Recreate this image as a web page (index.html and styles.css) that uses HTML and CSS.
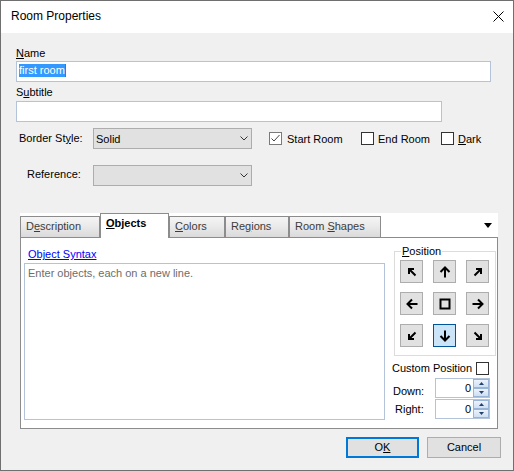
FILE: index.html
```html
<!DOCTYPE html>
<html>
<head>
<meta charset="utf-8">
<link rel="stylesheet" href="styles.css">
</head>
<body>
<div class="window">
  <div class="titlebar">
    <span class="title">Room Properties</span>
    <svg class="close" viewBox="0 0 11 11"><path d="M0.5 0.5 L10.5 10.5 M10.5 0.5 L0.5 10.5" stroke="#000" stroke-width="1" fill="none"/></svg>
  </div>
  <div class="content">
    <div class="lbl"><u>N</u>ame</div>
    <div class="field field-name"><span class="sel">first room</span></div>
    <div class="lbl lbl-sub">S<u>u</u>btitle</div>
    <div class="field field-sub"></div>

    <div class="row row-border">
      <div class="rowlabel">Border St<u>y</u>le:</div>
      <div class="combo"><span class="combo-text">Solid</span><svg class="chev" viewBox="0 0 8 5"><polyline points="0.5,0.5 4,4 7.5,0.5" stroke="#333" stroke-width="1" fill="none"/></svg></div>
      <div class="checks">
        <div class="check check-start"><span class="box checked"><svg viewBox="0 0 11 11"><polyline points="1.5,5.5 4,8 9.5,2" stroke="#444" stroke-width="1" fill="none"/></svg></span><span class="ctext">Start Room</span></div>
        <div class="check check-end"><span class="box"></span><span class="ctext">End Room</span></div>
        <div class="check"><span class="box"></span><span class="ctext"><u>D</u>ark</span></div>
      </div>
    </div>

    <div class="row row-ref">
      <div class="rowlabel">Reference:</div>
      <div class="combo"><span class="combo-text"></span><svg class="chev" viewBox="0 0 8 5"><polyline points="0.5,0.5 4,4 7.5,0.5" stroke="#333" stroke-width="1" fill="none"/></svg></div>
    </div>

    <div class="tabctl">
      <div class="strip">
        <div class="tab t-desc">D<u>e</u>scription</div>
        <div class="tab active t-obj"><u>O</u>bjects</div>
        <div class="tab t-col"><u>C</u>olors</div>
        <div class="tab t-reg">Re<u>g</u>ions</div>
        <div class="tab t-shp">Room <u>S</u>hapes</div>
        <div class="menu-tri"></div>
      </div>
      <div class="panel">
        <div class="leftcol">
          <div class="link">Object Syntax</div>
          <div class="textarea">Enter objects, each on a new line.</div>
        </div>
        <div class="rightcol">
          <fieldset class="group">
            <legend><u>P</u>osition</legend>
            <div class="grid">
              <div class="pbtn"><svg viewBox="0 0 12 12"><path d="M3 8 V3 H8 M3 3 L9.5 9.5"/></svg></div>
              <div class="pbtn"><svg viewBox="0 0 12 12"><path d="M6 11.5 V1.5 M1.5 6 L6 1.5 L10.5 6"/></svg></div>
              <div class="pbtn"><svg viewBox="0 0 12 12"><path d="M4 3 H9 V8 M9 3 L2.5 9.5"/></svg></div>
              <div class="pbtn"><svg viewBox="0 0 12 12"><path d="M11.5 6 H1.5 M6 1.5 L1.5 6 L6 10.5"/></svg></div>
              <div class="pbtn"><svg viewBox="0 0 12 12"><rect x="1.5" y="1.5" width="9" height="9" class="sq"/></svg></div>
              <div class="pbtn"><svg viewBox="0 0 12 12"><path d="M0.5 6 H10.5 M6 1.5 L10.5 6 L6 10.5"/></svg></div>
              <div class="pbtn"><svg viewBox="0 0 12 12"><path d="M3 4 V9 H8 M3 9 L9.5 2.5"/></svg></div>
              <div class="pbtn sel"><svg viewBox="0 0 12 12"><path d="M6 0.5 V10.5 M1.5 6 L6 10.5 L10.5 6"/></svg></div>
              <div class="pbtn"><svg viewBox="0 0 12 12"><path d="M9 4 V9 H4 M9 9 L2.5 2.5"/></svg></div>
            </div>
          </fieldset>
          <div class="cust"><span>Custom Position</span><span class="box"></span></div>
          <div class="spinrow down">
            <span class="spinlbl">Down:</span>
            <div class="spin"><span class="spinval">0</span><div class="spinbtns"><div class="sb"><svg viewBox="0 0 5 3"><polygon points="0,3 2.5,0 5,3"/></svg></div><div class="sb"><svg viewBox="0 0 5 3"><polygon points="0,0 2.5,3 5,0"/></svg></div></div></div>
          </div>
          <div class="spinrow right">
            <span class="spinlbl">Right:</span>
            <div class="spin"><span class="spinval">0</span><div class="spinbtns"><div class="sb"><svg viewBox="0 0 5 3"><polygon points="0,3 2.5,0 5,3"/></svg></div><div class="sb"><svg viewBox="0 0 5 3"><polygon points="0,0 2.5,3 5,0"/></svg></div></div></div>
          </div>
        </div>
      </div>
    </div>

    <div class="actions">
      <div class="btn btn-ok">O<u>K</u></div>
      <div class="btn btn-cancel">Cancel</div>
    </div>
  </div>
</div>
</body>
</html>
```

FILE: styles.css
```css
* { box-sizing: border-box; }
html, body { margin: 0; padding: 0; }
body {
  width: 514px;
  height: 471px;
  overflow: hidden;
  background: #f0f0f0;
  font-family: "Liberation Sans", Arial, sans-serif;
  font-size: 11px;
  color: #000;
}
u { text-decoration: underline; text-underline-offset: 1px; }

.window {
  width: 514px;
  height: 471px;
  border: 1px solid #6f6f6f;
  background: #f0f0f0;
}
.titlebar {
  height: 32px;
  background: #fff;
  display: flex;
  justify-content: space-between;
  align-items: flex-start;
  padding-left: 10px;
}
.title { font-size: 12px; line-height: 31px; }
.close { width: 11px; height: 11px; margin-top: 10px; margin-right: 9px; }

.content { padding: 14px 0 0 15px; }
.lbl { height: 13px; line-height: 13px; }
.lbl-sub { margin-top: 4px; }
.field {
  height: 21px;
  background: #fff;
  border: 1px solid #b3c3d9;
  padding: 2px 2px 0;
  line-height: 13px;
}
.field-name { width: 475px; margin-top: 1px; }
.field-sub { width: 426px; margin-top: 2px; }
.sel {
  display: inline-block;
  background: #3399ff;
  color: #fff;
  border-right: 1px solid #b05a20;
}

.row { display: flex; align-items: flex-start; height: 21px; }
.row-border { margin-top: 6px; }
.row-ref { margin-top: 16px; }
.rowlabel { width: 77px; line-height: 13px; }
.row-border .rowlabel { padding-left: 3px; margin-top: 4px; }
.row-ref .rowlabel { padding-left: 11px; margin-top: 3px; }
.combo {
  width: 159px;
  height: 21px;
  border: 1px solid #adadad;
  background: #e1e1e1;
  display: flex;
  justify-content: space-between;
  align-items: center;
  padding: 0 3px 0 2px;
}
.combo-text { align-self: flex-start; line-height: 18px; padding-top: 1px; }
.chev { width: 8px; height: 5px; }

.checks { display: flex; align-items: center; height: 21px; margin-left: 17px; }
.check { display: flex; align-items: center; line-height: 13px; }
.ctext { padding-top: 2px; }
.check-start { width: 92px; }
.check-end { width: 80px; }
.box {
  display: block;
  width: 13px;
  height: 13px;
  border: 1px solid #333;
  background: #fff;
  margin-right: 4px;
}
.check-start .box { margin-right: 5px; }
.box.checked { border-color: #7a7a7a; }
.box svg { display: block; width: 11px; height: 11px; }

.tabctl { margin: 27px 0 0 4px; width: 478px; height: 216px; }
.strip {
  height: 24px;
  background: #fff;
  display: flex;
  align-items: flex-end;
}
.tab {
  height: 21px;
  border: 1px solid #8c8c8c;
  border-bottom: 0;
  background: linear-gradient(#f5f5f5, #e9e9e9 50%, #dadada);
  padding-left: 5px;
  line-height: 19px;
  color: #3c3c3c;
  white-space: nowrap;
}
.tab.active {
  height: 25px;
  margin-bottom: -1px;
  background: #fff;
  font-weight: bold;
  color: #000;
  position: relative;
  z-index: 1;
}
.t-desc { width: 80px; }
.t-obj { width: 69px; }
.t-col { width: 56px; }
.t-reg { width: 64px; }
.t-shp { width: 92px; }
.menu-tri {
  align-self: flex-start;
  margin: 10px 6px 0 auto;
  width: 0;
  height: 0;
  border-left: 4px solid transparent;
  border-right: 4px solid transparent;
  border-top: 5px solid #000;
}

.panel {
  height: 192px;
  border: 1px solid #8c8c8c;
  background: #fff;
  display: flex;
}
.leftcol { padding-left: 3px; }
.link {
  margin-top: 10px;
  padding-left: 4px;
  line-height: 13px;
  color: #0000ff;
  text-decoration: underline;
}
.textarea {
  margin-top: 2px;
  width: 361px;
  height: 157px;
  border: 1px solid #b3c3d9;
  padding: 3px 3px;
  line-height: 13px;
  color: #6d6d6d;
}

.rightcol { margin-left: 6px; width: 106px; }
.group {
  margin: 7px 0 0 3px;
  width: 102px;
  border: 1px solid #dcdcdc;
  padding: 0 0 8px 0;
  min-width: 0;
}
.group legend { padding: 0 1px; margin-left: 6px; line-height: 13px; }
.grid {
  margin: 2px 0 0 5px;
  display: grid;
  grid-template-columns: repeat(3, 23px);
  grid-template-rows: repeat(3, 23px);
  column-gap: 10px;
  row-gap: 9px;
}
.pbtn {
  border: 1px solid #adadad;
  background: #e1e1e1;
  display: flex;
  align-items: center;
  justify-content: center;
}
.pbtn.sel { border-color: #005499; background: #cce4f7; }
.pbtn svg { width: 12px; height: 12px; }
.pbtn path { stroke: #000; stroke-width: 2; fill: none; }
.pbtn .sq { stroke: #000; stroke-width: 2; fill: none; }

.cust {
  margin-top: 6px;
  height: 13px;
  line-height: 13px;
  display: flex;
  justify-content: space-between;
  padding: 0 8px 0 1px;
}
.cust .box { margin-right: 0; }
.spinrow {
  display: flex;
  justify-content: space-between;
  height: 20px;
  padding-right: 7px;
}
.spinrow.down { margin-top: 3px; align-items: flex-end; padding-left: 2px; }
.spinrow.right { margin-top: 1px; align-items: center; padding-left: 4px; }
.spinlbl { line-height: 13px; }
.spin {
  width: 55px;
  height: 20px;
  border: 1px solid #b3c3d9;
  background: #fff;
  display: flex;
}
.spinval { flex: 1; text-align: right; padding-right: 2px; line-height: 18px; }
.spinbtns { width: 16px; display: flex; flex-direction: column; }
.sb {
  height: 9px;
  border: 1px solid #9ab4d8;
  background: linear-gradient(#edf3fb, #cddff3);
  display: flex;
  align-items: center;
  justify-content: center;
}
.sb svg { width: 5px; height: 3px; fill: #23416e; }

.actions {
  margin-top: 8px;
  display: flex;
  justify-content: flex-end;
  gap: 8px;
  padding-right: 12px;
}
.btn {
  height: 21px;
  border: 1px solid #adadad;
  background: #e1e1e1;
  text-align: center;
  line-height: 19px;
}
.btn-ok { width: 73px; border: 2px solid #0078d7; line-height: 17px; }
.btn-cancel { width: 74px; }
```
